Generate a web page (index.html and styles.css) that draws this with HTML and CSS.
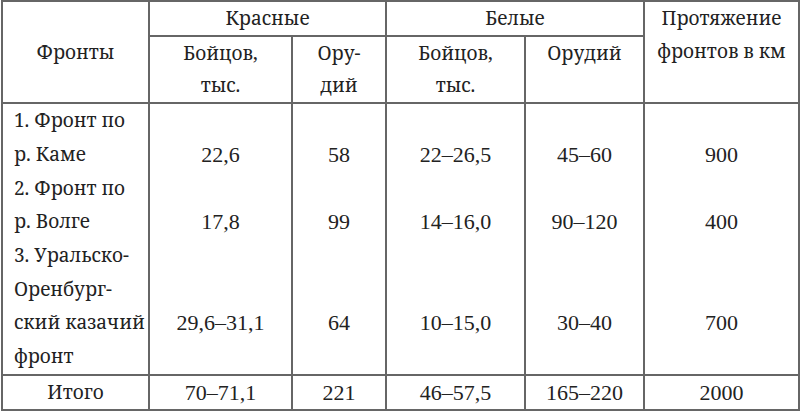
FILE: index.html
```html
<!DOCTYPE html>
<html lang="ru">
<head>
<meta charset="utf-8">
<link rel="stylesheet" href="styles.css">
</head>
<body>
<table class="tbl">
  <colgroup>
    <col class="c1"><col class="c2"><col class="c3"><col class="c4"><col class="c5"><col class="c6">
  </colgroup>
  <thead>
    <tr>
      <th rowspan="2" class="mid">Фронты</th>
      <th colspan="2">Красные</th>
      <th colspan="2">Белые</th>
      <th rowspan="2" class="top">Протяжение<br>фронтов в км</th>
    </tr>
    <tr>
      <th class="mid">Бойцов,<br>тыс.</th>
      <th class="mid">Ору-<br>дий</th>
      <th class="mid">Бойцов,<br>тыс.</th>
      <th class="top">Орудий</th>
    </tr>
  </thead>
  <tbody>
    <tr class="body">
      <td class="name">1. Фронт по<br>р. Каме</td>
      <td>22,6</td><td>58</td><td>22–26,5</td><td>45–60</td><td>900</td>
    </tr>
    <tr class="body">
      <td class="name">2. Фронт по<br>р. Волге</td>
      <td>17,8</td><td>99</td><td>14–16,0</td><td>90–120</td><td>400</td>
    </tr>
    <tr class="body last">
      <td class="name">3. Уральско-<br>Оренбург-<br>ский казачий<br>фронт</td>
      <td>29,6–31,1</td><td>64</td><td>10–15,0</td><td>30–40</td><td>700</td>
    </tr>
    <tr class="total">
      <td class="word">Итого</td>
      <td>70–71,1</td><td>221</td><td>46–57,5</td><td>165–220</td><td>2000</td>
    </tr>
  </tbody>
</table>
</body>
</html>
```
FILE: styles.css
```css
html, body {
  margin: 0;
  padding: 0;
  background: #ffffff;
}
.tbl {
  border-collapse: collapse;
  table-layout: fixed;
  width: 797px;
  margin: 0 0 0 1px;
  font-family: "Liberation Serif", "Noto Serif", "DejaVu Serif", serif;
  font-size: 22px;
  line-height: 33.7px;
  color: #222;
}
.c1 { width: 147px; }
.c2 { width: 143px; }
.c3 { width: 94px; }
.c4 { width: 139px; }
.c5 { width: 119px; }
.c6 { width: 155px; }
.tbl th, .tbl td {
  border: 2px solid #666;
  padding: 0;
  text-align: center;
  font-weight: normal;
  white-space: nowrap;
}
.tbl th,
.tbl td.name,
.tbl td.word {
  font-family: "Noto Serif", "DejaVu Serif", "Liberation Serif", serif;
  font-size: 19px;
}
.tbl th {
  vertical-align: top;
  line-height: 32.7px;
}
.tbl th.mid { vertical-align: middle; }
.tbl tr.body td {
  border-top: none;
  border-bottom: none;
  vertical-align: bottom;
}
.tbl tr.body.last td { padding-bottom: 33.7px; }
.tbl tr.body.last td.name { padding-bottom: 0; }
.tbl td.name {
  text-align: left;
  padding-left: 11px;
}
.tbl tr.total td { vertical-align: middle; }
```
